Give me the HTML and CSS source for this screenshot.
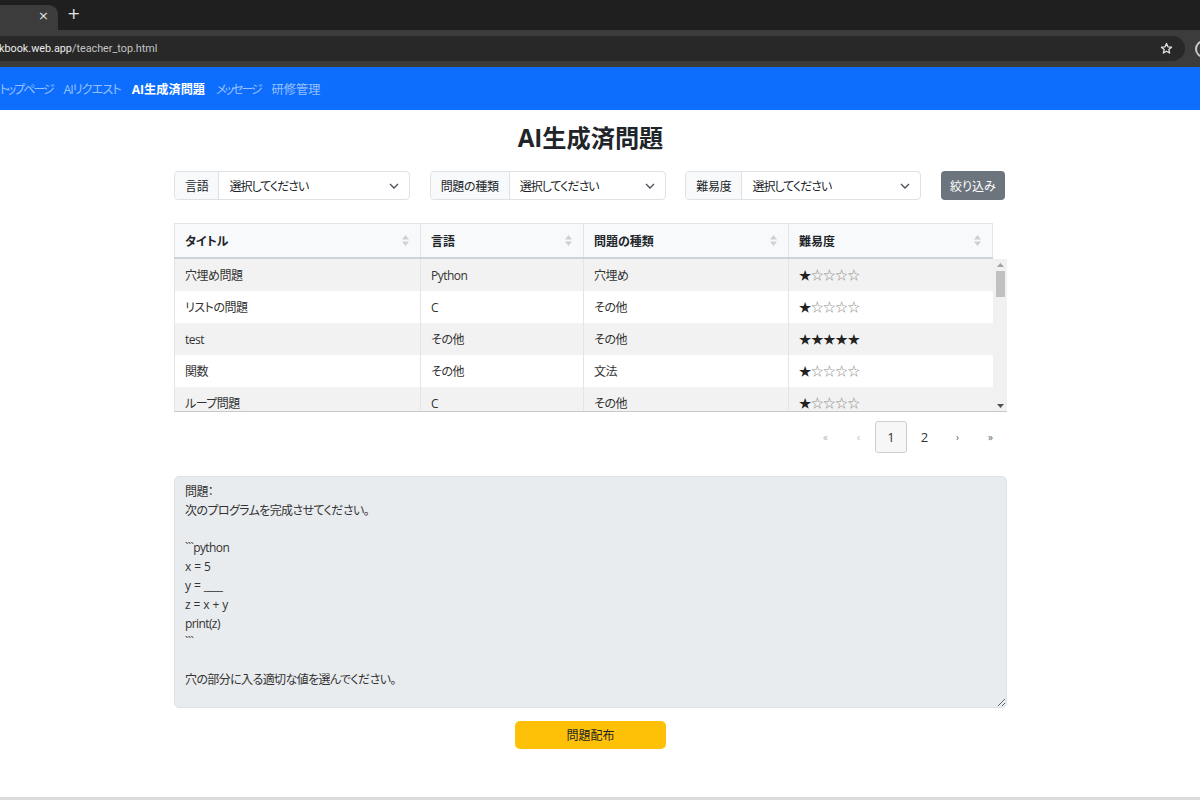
FILE: index.html
```html
<!DOCTYPE html>
<html lang="ja">
<head>
<meta charset="utf-8">
<title>AI生成済問題</title>
<link rel="stylesheet" href="styles.css">
</head>
<body>
<div class="chrome">
  <div class="tabstrip">
    <div class="tab"><span class="tab-close">×</span></div>
    <span class="newtab">+</span>
  </div>
  <div class="toolbar">
    <div class="omnibox">
      <span class="url"><span class="host">kbook.web.app</span><span class="path">/teacher_top.html</span></span>
      <svg class="star-icon" width="13" height="13" viewBox="0 0 24 24"><path d="M12 2.8l2.7 6.1 6.6.6-5 4.4 1.5 6.5L12 17l-5.8 3.4 1.5-6.5-5-4.4 6.6-.6z" fill="none" stroke="#e3e3e3" stroke-width="2.4" stroke-linejoin="round"/></svg>
    </div>
    <span class="profile"></span>
  </div>
</div>

<nav class="navbar">
  <a class="nav-link kana">トップページ</a>
  <a class="nav-link mixed">AIリクエスト</a>
  <a class="nav-link active">AI生成済問題</a>
  <a class="nav-link kana">メッセージ</a>
  <a class="nav-link">研修管理</a>
</nav>

<main class="main">
  <h2 class="page-title">AI生成済問題</h2>

  <div class="filters">
    <div class="input-group">
      <span class="ig-label">言語</span>
      <div class="select"><span class="ph">選択してください</span><svg class="chev" width="10" height="6" viewBox="0 0 10 6"><path d="M1 1l4 4 4-4" fill="none" stroke="#495057" stroke-width="1.3"/></svg></div>
    </div>
    <div class="input-group">
      <span class="ig-label">問題の種類</span>
      <div class="select"><span class="ph">選択してください</span><svg class="chev" width="10" height="6" viewBox="0 0 10 6"><path d="M1 1l4 4 4-4" fill="none" stroke="#495057" stroke-width="1.3"/></svg></div>
    </div>
    <div class="input-group">
      <span class="ig-label">難易度</span>
      <div class="select"><span class="ph">選択してください</span><svg class="chev" width="10" height="6" viewBox="0 0 10 6"><path d="M1 1l4 4 4-4" fill="none" stroke="#495057" stroke-width="1.3"/></svg></div>
    </div>
    <button class="btn-filter">絞り込み</button>
  </div>

  <div class="table">
    <div class="thead">
      <div class="th"><span>タイトル</span><svg class="sort" width="7" height="11" viewBox="0 0 7 11"><path d="M0 4.5L3.5 0 7 4.5z M0 6.5h7L3.5 11z" fill="#cfcfcf"/></svg></div>
      <div class="th"><span>言語</span><svg class="sort" width="7" height="11" viewBox="0 0 7 11"><path d="M0 4.5L3.5 0 7 4.5z M0 6.5h7L3.5 11z" fill="#cfcfcf"/></svg></div>
      <div class="th"><span>問題の種類</span><svg class="sort" width="7" height="11" viewBox="0 0 7 11"><path d="M0 4.5L3.5 0 7 4.5z M0 6.5h7L3.5 11z" fill="#cfcfcf"/></svg></div>
      <div class="th"><span>難易度</span><svg class="sort" width="7" height="11" viewBox="0 0 7 11"><path d="M0 4.5L3.5 0 7 4.5z M0 6.5h7L3.5 11z" fill="#cfcfcf"/></svg></div>
    </div>
    <div class="tbody">
      <div class="rows">
        <div class="tr odd"><div class="td">穴埋め問題</div><div class="td">Python</div><div class="td">穴埋め</div><div class="td stars"><span class="on">★</span><span class="off">☆☆☆☆</span></div></div>
        <div class="tr"><div class="td">リストの問題</div><div class="td">C</div><div class="td">その他</div><div class="td stars"><span class="on">★</span><span class="off">☆☆☆☆</span></div></div>
        <div class="tr odd"><div class="td">test</div><div class="td">その他</div><div class="td">その他</div><div class="td stars"><span class="on">★★★★★</span></div></div>
        <div class="tr"><div class="td">関数</div><div class="td">その他</div><div class="td">文法</div><div class="td stars"><span class="on">★</span><span class="off">☆☆☆☆</span></div></div>
        <div class="tr odd"><div class="td">ループ問題</div><div class="td">C</div><div class="td">その他</div><div class="td stars"><span class="on">★</span><span class="off">☆☆☆☆</span></div></div>
      </div>
      <div class="vscroll">
        <svg class="sb-arrow" width="7" height="4" viewBox="0 0 7 4"><path d="M0 4L3.5 0 7 4z" fill="#a3a3a3"/></svg>
        <div class="sb-thumb"></div>
        <div class="sb-space"></div>
        <svg class="sb-arrow" width="7" height="4" viewBox="0 0 7 4"><path d="M0 0h7L3.5 4z" fill="#505050"/></svg>
      </div>
    </div>
  </div>

  <div class="pagination">
    <span class="pg muted">«</span>
    <span class="pg muted">‹</span>
    <span class="pg current">1</span>
    <span class="pg">2</span>
    <span class="pg arrow">›</span>
    <span class="pg arrow">»</span>
  </div>

  <textarea class="question" readonly>問題：
次のプログラムを完成させてください。

&#96;&#96;&#96;python
x = 5
y = ____
z = x + y
print(z)
&#96;&#96;&#96;

穴の部分に入る適切な値を選んでください。</textarea>

  <div class="actions">
    <button class="btn-distribute">問題配布</button>
  </div>
</main>
<div class="bottom-strip"></div>
</body>
</html>
```

FILE: styles.css
```css
* { box-sizing: border-box; }

body {
  margin: 0;
  width: 1200px;
  height: 800px;
  overflow: hidden;
  background: #fff;
  color: #212529;
  font-family: "Open Sans", "Noto Sans CJK JP", sans-serif;
  font-feature-settings: "palt";
}

/* ---------- browser chrome ---------- */
.tabstrip {
  height: 30px;
  background: #1f1f1f;
  display: flex;
  align-items: flex-start;
}
.tab {
  flex: 0 0 58px;
  height: 25px;
  margin-top: 5px;
  background: #3c3c3c;
  border-radius: 0 9px 0 0;
  display: flex;
  align-items: center;
  justify-content: flex-end;
  padding: 0 9px 5px 0;
}
.tab-close {
  color: #e3e3e3;
  font: 13px "DejaVu Sans", sans-serif;
}
.newtab {
  margin: 4px 0 0 9px;
  color: #e3e3e3;
  font: 16px "DejaVu Sans", sans-serif;
  line-height: 20px;
}
.toolbar {
  height: 37px;
  background: #3c3c3c;
  display: flex;
  align-items: center;
  overflow: hidden;
}
.omnibox {
  flex: 0 0 1185px;
  height: 25px;
  background: #282828;
  border-radius: 0 13px 13px 0;
  display: flex;
  align-items: center;
  justify-content: space-between;
  padding: 0 12px 0 0;
}
.url {
  font: 10.8px Roboto, sans-serif;
  margin-left: -1px;
}
.host { color: #ececec; }
.path { color: #c4c4c4; }
.profile {
  flex: 0 0 18px;
  height: 18px;
  margin-left: 10px;
  border: 2px solid #c8c8c8;
  border-radius: 50%;
}

/* ---------- navbar ---------- */
.navbar {
  height: 43px;
  background: #0d6efd;
  display: flex;
  align-items: center;
  margin-left: -6px;
}
.nav-link {
  padding: 0 5.5px;
  color: rgba(255, 255, 255, 0.58);
  font-size: 12.2px;
}
.nav-link.kana { letter-spacing: -2.2px; }
.nav-link.mixed { letter-spacing: -1px; }
.nav-link.active {
  color: #fff;
  font-weight: 700;
}

/* ---------- main ---------- */
.main {
  width: 833px;
  margin-left: 174px;
}
.page-title {
  margin: 13px 0 18px;
  text-align: center;
  font-size: 24.2px;
  line-height: 30px;
  font-weight: 700;
}

.filters {
  width: 831px;
  display: flex;
  justify-content: space-between;
  align-items: center;
}
.input-group {
  flex: 0 0 236px;
  width: 236px;
  height: 29px;
  display: flex;
  border: 1px solid #dee2e6;
  border-radius: 4px;
  font-size: 12px;
}
.ig-label {
  display: flex;
  align-items: center;
  padding: 0 10px;
  background: #f8f9fa;
  border-right: 1px solid #dee2e6;
  border-radius: 4px 0 0 4px;
  letter-spacing: -0.3px;
}
.select {
  flex: 1;
  display: flex;
  align-items: center;
  justify-content: space-between;
  padding: 0 10px 0 10px;
}
.ph { letter-spacing: -1px; }
.btn-filter {
  flex: 0 0 64px;
  width: 64px;
  height: 29px;
  border: 0;
  border-radius: 4px;
  background: #6c757d;
  color: #fff;
  font: inherit;
  font-size: 12px;
}

/* ---------- table ---------- */
.table {
  margin-top: 23px;
}
.thead {
  width: 819px;
  display: grid;
  grid-template-columns: 246px 163px 205px 205px;
  background: #f8f9fa;
  border-top: 1px solid #e3e5e8;
  border-bottom: 2px solid #cfd2d5;
}
.th {
  height: 33px;
  display: flex;
  align-items: center;
  justify-content: space-between;
  padding: 0 11px 0 10px;
  border-left: 1px solid #e3e5e8;
  font-size: 12px;
  font-weight: 700;
}
.th:last-child { border-right: 1px solid #e3e5e8; }

.tbody {
  height: 153px;
  display: flex;
  border-bottom: 1px solid #c9c9c9;
  overflow: hidden;
}
.rows {
  width: 819px;
}
.tr {
  height: 32px;
  display: grid;
  grid-template-columns: 246px 163px 205px 205px;
  background: #fff;
}
.tr.odd { background: #f2f2f2; }
.td {
  display: flex;
  align-items: center;
  padding: 0 10px;
  border-left: 1px solid #e4e4e4;
  font-size: 12px;
  color: #333;
  letter-spacing: -0.5px;
}
.td.stars {
  font-family: "Noto Sans CJK JP", sans-serif;
  font-size: 12.2px;
  font-feature-settings: normal;
  letter-spacing: 0;
}
.stars .on { color: #222; }
.stars .off { color: #8a8a8a; }

.vscroll {
  width: 14px;
  background: #f1f1f1;
  display: flex;
  flex-direction: column;
  align-items: center;
  padding: 4px 0 3px;
}
.sb-thumb {
  width: 9px;
  height: 26px;
  margin-top: 4px;
  background: #c1c1c1;
}
.sb-space { flex: 1; }

/* ---------- pagination ---------- */
.pagination {
  margin-top: 9px;
  display: flex;
  justify-content: flex-end;
  height: 32px;
}
.pg {
  width: 33px;
  height: 32px;
  display: flex;
  align-items: center;
  justify-content: center;
  font-size: 13px;
  color: #333;
}
.pg.muted { color: #b5b5b5; font-size: 10px; }
.pg.arrow { color: #666; font-size: 10px; }
.pg.current {
  width: 32px;
  border: 1px solid #cfcfcf;
  border-radius: 3px;
  background: #f7f7f7;
  margin-right: 1px;
}

/* ---------- question ---------- */
.question {
  display: block;
  width: 833px;
  height: 232px;
  margin: 23px 0 0;
  padding: 6px 10px 5px;
  background: #e9ecef;
  border: 1px solid #dee2e6;
  border-radius: 5px;
  color: #333;
  font-family: "Open Sans", "Noto Sans CJK JP", sans-serif;
  font-feature-settings: "palt";
  font-size: 12px;
  line-height: 18.8px;
  letter-spacing: -0.6px;
  word-spacing: 1px;
  resize: vertical;
  overflow: hidden;
}

.actions {
  display: flex;
  justify-content: center;
  margin-top: 13px;
}
.btn-distribute {
  width: 151px;
  height: 28px;
  border: 0;
  border-radius: 5px;
  background: #ffc107;
  color: #212529;
  font: inherit;
  font-size: 12px;
}

.bottom-strip {
  margin-top: 48px;
  height: 6px;
  background: #dcdcdc;
}
```
